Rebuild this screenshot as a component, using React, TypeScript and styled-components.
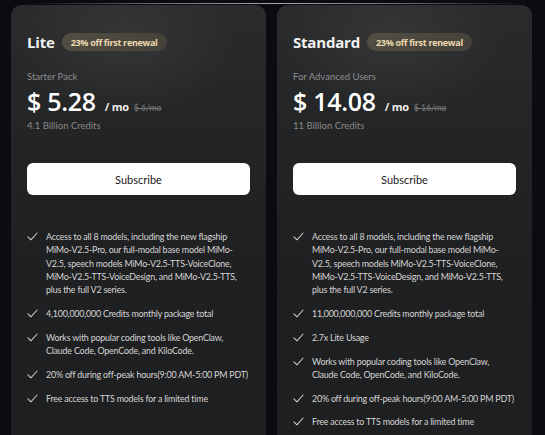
import React from "react";
import styled, { createGlobalStyle } from "styled-components";

const Global = createGlobalStyle`
  html, body { margin: 0; padding: 0; background: #0b0b11; }
  body { font-family: "Lato", "Noto Sans", sans-serif; -webkit-font-smoothing: antialiased; }
`;

const Page = styled.div`
  position: relative;
  width: 545px;
  height: 435px;
  overflow: hidden;
  background: #0b0b11;
  box-sizing: border-box;
  padding: 5px 12px 0 11px;
  display: grid;
  grid-template-columns: 255px 255px;
  column-gap: 11px;
  &::before {
    content: "";
    position: absolute;
    left: 30px;
    right: 20px;
    top: 3px;
    height: 1px;
    background: linear-gradient(90deg, rgba(255,255,255,0) 0%, rgba(190,190,190,0.55) 25%, rgba(220,220,220,0.75) 50%, rgba(190,190,190,0.55) 75%, rgba(255,255,255,0) 100%);
  }
`;

const Card = styled.div`
  border-radius: 11px 11px 0 0;
  background:
    radial-gradient(ellipse 160px 110px at 45% 8%, rgba(255,255,255,0.06), rgba(255,255,255,0) 70%),
    linear-gradient(180deg, #2a2b2d 0%, #242526 25%, #1f2021 55%, #1e1f20 100%);
  padding: 27px 16px 0 16px;
  display: flex;
  flex-direction: column;
  height: 460px;
  box-sizing: border-box;
`;

const TitleRow = styled.div`
  display: flex;
  align-items: center;
  gap: 7px;
  height: 20px;
`;

const Title = styled.div`
  font-family: "Open Sans", sans-serif;
  font-weight: 700;
  font-size: 15px;
  color: #f2f2f2;
  letter-spacing: -0.2px;
`;

const Badge = styled.span`
  display: inline-flex;
  align-items: center;
  height: 18px;
  padding: 0 9px;
  border-radius: 9px;
  background: linear-gradient(90deg, #534e43, #45423b);
  color: #ecdab0;
  font-family: "Open Sans", sans-serif;
  font-weight: 700;
  font-size: 9px;
  letter-spacing: -0.3px;
`;

const Sub = styled.div`
  margin-top: 19px;
  font-size: 9.5px;
  color: #8e8e8e;
  line-height: 12px;
`;

const PriceRow = styled.div`
  display: flex;
  align-items: baseline;
  margin-top: 1px;
  height: 34px;
`;

const Price = styled.span`
  font-family: "Open Sans", sans-serif;
  font-weight: 600;
  font-size: 25px;
  color: #ffffff;
  letter-spacing: -0.3px;
`;

const Per = styled.span`
  font-family: "Open Sans", sans-serif;
  font-weight: 700;
  font-size: 11px;
  color: #f0f0f0;
  margin-left: 9px;
  letter-spacing: -0.2px;
`;

const Old = styled.span`
  font-size: 8.5px;
  color: #7a7a7a;
  text-decoration: line-through;
  margin-left: 5px;
`;

const Credits = styled.div`
  margin-top: 2px;
  font-size: 9.5px;
  color: #8a8a8a;
  line-height: 12px;
`;

const Button = styled.button`
  margin-top: 31px;
  height: 32px;
  width: 100%;
  border: none;
  border-radius: 6px;
  background: #ffffff;
  color: #1a1a1a;
  font-family: "Lato", sans-serif;
  font-size: 11px;
  cursor: pointer;
`;

const List = styled.ul`
  list-style: none;
  margin: 35px 0 0 0;
  padding: 0;
  display: flex;
  flex-direction: column;
  gap: 10.5px;
`;

const Item = styled.li`
  display: flex;
  gap: 8px;
  align-items: flex-start;
  font-size: 8.9px;
  line-height: 13.3px;
  color: #d6d6d6;
  letter-spacing: -0.2px;
`;

const Check = styled.svg`
  flex: 0 0 11px;
  width: 11px;
  height: 11px;
  margin-top: 1px;
`;

const Text = styled.span`
  flex: 1;
`;

const CheckIcon = () => (
  <Check viewBox="0 0 12 12" fill="none">
    <path d="M1 6.3 L4.3 9.6 L11 2.2" stroke="#cfcfcf" strokeWidth="1.1" strokeLinecap="round" strokeLinejoin="round" />
  </Check>
);

type Plan = {
  name: string;
  sub: string;
  price: string;
  old: string;
  credits: string;
  features: string[];
};

const common = "Access to all 8 models, including the new flagship MiMo-V2.5-Pro, our full-modal base model MiMo-V2.5, speech models MiMo-V2.5-TTS-VoiceClone, MiMo-V2.5-TTS-VoiceDesign, and MiMo-V2.5-TTS, plus the full V2 series.";

const plans: Plan[] = [
  {
    name: "Lite",
    sub: "Starter Pack",
    price: "$ 5.28",
    old: "$ 6/mo",
    credits: "4.1 Billion Credits",
    features: [
      common,
      "4,100,000,000 Credits monthly package total",
      "Works with popular coding tools like OpenClaw, Claude Code, OpenCode, and KiloCode.",
      "20% off during off-peak hours(9:00 AM-5:00 PM PDT)",
      "Free access to TTS models for a limited time",
    ],
  },
  {
    name: "Standard",
    sub: "For Advanced Users",
    price: "$ 14.08",
    old: "$ 16/mo",
    credits: "11 Billion Credits",
    features: [
      common,
      "11,000,000,000 Credits monthly package total",
      "2.7x Lite Usage",
      "Works with popular coding tools like OpenClaw, Claude Code, OpenCode, and KiloCode.",
      "20% off during off-peak hours(9:00 AM-5:00 PM PDT)",
      "Free access to TTS models for a limited time",
    ],
  },
];

export default function App() {
  return (
    <>
      <Global />
      <Page>
        {plans.map((p) => (
          <Card key={p.name}>
            <TitleRow>
              <Title>{p.name}</Title>
              <Badge>23% off first renewal</Badge>
            </TitleRow>
            <Sub>{p.sub}</Sub>
            <PriceRow>
              <Price>{p.price}</Price>
              <Per>/ mo</Per>
              <Old>{p.old}</Old>
            </PriceRow>
            <Credits>{p.credits}</Credits>
            <Button>Subscribe</Button>
            <List>
              {p.features.map((f, i) => (
                <Item key={i}>
                  <CheckIcon />
                  <Text>{f}</Text>
                </Item>
              ))}
            </List>
          </Card>
        ))}
      </Page>
    </>
  );
}
